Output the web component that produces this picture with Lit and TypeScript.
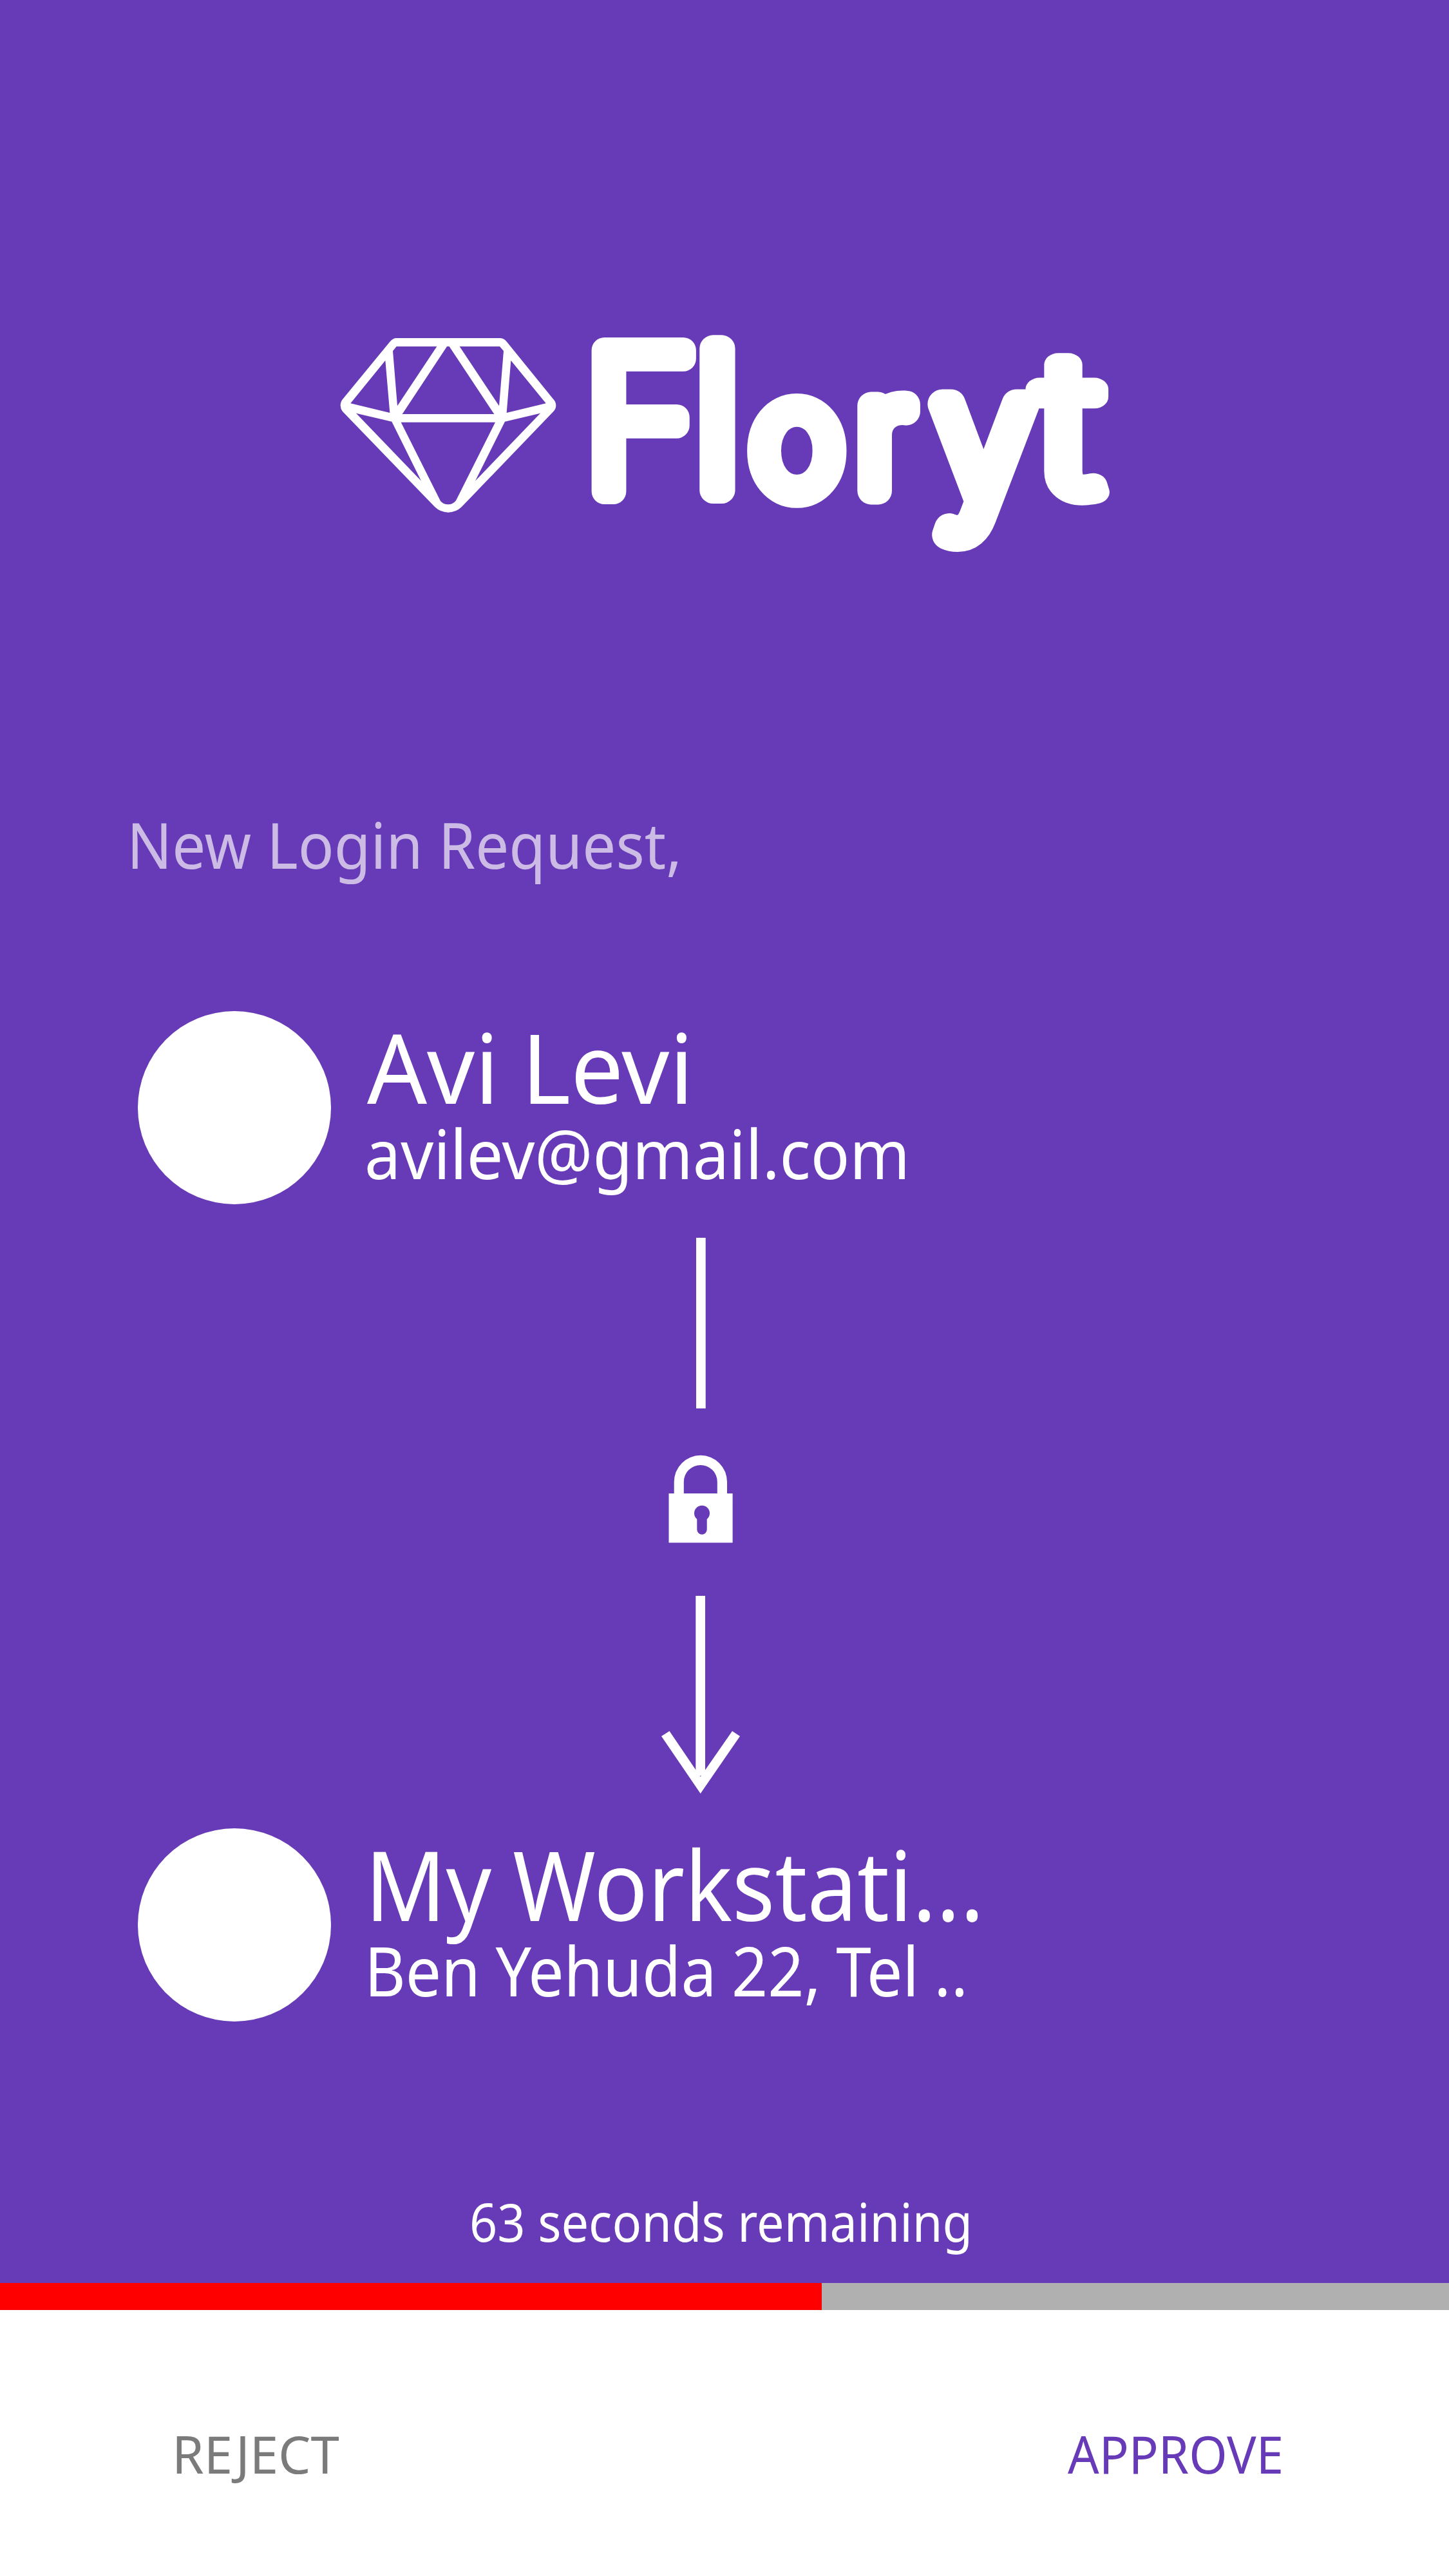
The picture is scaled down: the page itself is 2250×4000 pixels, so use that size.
import { LitElement, html, svg, css } from "lit";
import { customElement, property } from "lit/decorators.js";

/** One line of text set to an exact advance width. */
const line = (text: string, x: number, y: number, size: number, width: number) => svg`
  <text x=${x} y=${y} font-size=${size} textLength=${width} lengthAdjust="spacingAndGlyphs">${text}</text>`;

@customElement("brand-logo")
export class BrandLogo extends LitElement {
  static styles = css`
    :host { display: flex; padding: 500px 0 0 510px; height: 380px; }
    svg { display: block; overflow: visible; flex: none; fill: #fff; }
    .word { font-family: Inter, "Liberation Sans", sans-serif; font-weight: 200; stroke: #fff; stroke-linejoin: round; stroke-linecap: round; }
  `;
  render() {
    return html`
      <svg width="380" height="320" viewBox="0 0 1140 960">
        <path fill-rule="evenodd" d="M317 75H800Q820 76 832 94L1048 360Q1060 372 1060 389Q1060 404 1048 417L620 862Q594 887 558 887Q522 887 496 862L66 417Q56 404 56 389Q56 372 66 360L286 92Q300 75 317 75Z
          M317 114H505L321 391L300 135Z M552 114H563L772 429H344Z M611 114H798L816 135L795 391Z
          M265 179L286 423L103 379Z M850 179L1013 379L830 423Z
          M129 425L295 464L432 740Z M987 425L822 464L684 740Z
          M338 467H777L594 832Q580 850 558 850Q535 850 522 834Z"/>
      </svg>
      <svg class="word" width="860" height="380" viewBox="890 500 860 380">
        <text><tspan x="907" y="763" font-size="301" stroke-width="40">F</tspan><tspan x="1080" y="761" font-size="302" stroke-width="42">l</tspan><tspan x="1167" y="765" font-size="240" stroke-width="42">o</tspan><tspan x="1331" y="762" font-size="242" stroke-width="43">r</tspan><tspan x="1452" y="777" font-size="274" stroke-width="46">y</tspan><tspan x="1612" y="765" font-size="294" stroke-width="36" textLength="96" lengthAdjust="spacingAndGlyphs">t</tspan></text>
      </svg>`;
  }
}

@customElement("party-row")
export class PartyRow extends LitElement {
  @property() name = "";
  @property() detail = "";
  @property({ type: Array }) nameFit: number[] = [];
  @property({ type: Array }) detailFit: number[] = [];
  static styles = css`
    :host { display: flex; height: 300px; padding-left: 214px; }
    .avatar { width: 300px; height: 300px; border-radius: 50%; background: #fff; flex: none; }
    svg { display: block; overflow: visible; fill: #fff; font-family: "Noto Sans", sans-serif; }
    text { word-spacing: -0.02em; }
  `;
  render() {
    const [nx, nw] = this.nameFit;
    const [dx, dw] = this.detailFit;
    return html`
      <div class="avatar"></div>
      <svg width="1100" height="300">
        ${line(this.name, nx, 143.7, 149.6, nw)}
        ${line(this.detail, dx, 261, 106.5, dw)}
      </svg>`;
  }
}

@customElement("app-root")
export class AppRoot extends LitElement {
  @property({ type: Number }) progress = 56.71;
  static styles = css`
    :host { display: flex; flex-direction: column; width: 2250px; height: 4000px; background: #673ab7; overflow: hidden; font-family: "Noto Sans", sans-serif; }
    svg { display: block; overflow: visible; }
    .heading { margin: 371px 0 197px 197px; fill: #cbbbe5; }
    .link { margin-left: 1010px; fill: #fff; }
    .status { flex: 1; padding: 261px 0 0 729px; fill: #fff; }
    .track { height: 42px; background: #b0b0b0; }
    .fill { height: 100%; background: #f00; }
    .actions { display: flex; justify-content: space-between; box-sizing: border-box; height: 413px; padding: 173px 257px 0 267px; background: #fff; }
    .reject { fill: #7b7b7b; }
    .approve { fill: #673ab7; }
  `;
  render() {
    return html`
      <brand-logo></brand-logo>
      <svg class="heading" width="862" height="122">${line("New Login Request,", 0, 98, 98, 862)}</svg>
      <party-row name="Avi Levi" detail="avilev@gmail.com" .nameFit=${[56, 507]} .detailFit=${[52, 847]}></party-row>
      <svg class="link" width="160" height="969" viewBox="1010 1870 160 969">
        <rect x="1081" y="1922" width="14.7" height="265"/>
        <path fill-rule="evenodd" d="M1038.5 2319H1046.7V2301A41.15 41.15 0 0 1 1129 2301V2319H1137.6V2395.6H1038.5Z
          M1061.8 2319H1113.8V2301A26 26 0 0 0 1061.8 2301Z
          M1082.3 2359V2375A7.7 7.7 0 0 0 1097.7 2375V2359A12 12 0 1 0 1082.3 2359Z"/>
        <rect x="1080.3" y="2478" width="14.7" height="279.5"/>
        <path d="M1027 2696L1039.5 2688L1087.7 2759L1137 2688L1149 2696L1087.7 2785Z"/>
      </svg>
      <party-row name="My Workstati..." detail="Ben Yehuda 22, Tel .." .nameFit=${[53, 961]} .detailFit=${[52, 937]}></party-row>
      <div class="status"><svg width="781" height="100">${line("63 seconds remaining", 0, 81, 81.3, 781)}</svg></div>
      <div class="track"><div class="fill" style="width:${this.progress}%"></div></div>
      <div class="actions">
        <svg class="reject" width="260" height="100">${line("REJECT", 0, 81, 81.2, 260)}</svg>
        <svg class="approve" width="335" height="100">${line("APPROVE", 0, 81, 81.2, 335)}</svg>
      </div>`;
  }
}
